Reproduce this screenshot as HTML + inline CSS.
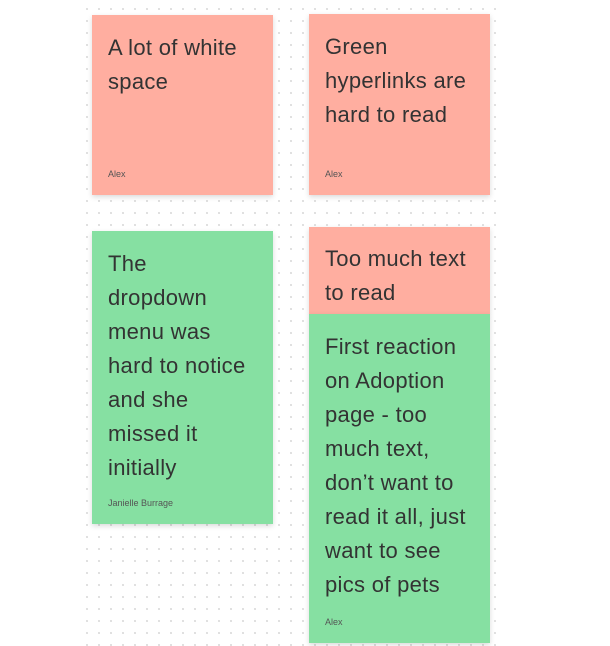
<!DOCTYPE html>
<html><head><style>
body{margin:0;width:610px;height:646px;background:#fff;position:relative;overflow:hidden;font-family:"Liberation Sans",sans-serif;}
.grid{position:absolute;left:80px;top:0;width:425px;height:646px;background-image:radial-gradient(circle,#d8d8d8 0.8px,transparent 1.1px);background-size:12px 12px;background-position:1px 3px;}
.c{position:absolute;box-sizing:border-box;padding:16px 10px 0 16px;color:#333;font-size:22px;line-height:34px;letter-spacing:0.3px;white-space:nowrap;box-shadow:0 2px 5px rgba(0,0,0,.15);}
.p{background:#ffaea0}.g{background:#86e0a2}
.a{position:absolute;left:16px;font-size:9px;line-height:10px;color:#555;letter-spacing:0;}
</style></head><body>
<div class="grid"></div>
<div class="c p" style="left:92px;top:15px;width:181px;height:180px">A lot of white<br>space<div class="a" style="top:154px">Alex</div></div>
<div class="c p" style="left:309px;top:14px;width:181px;height:181px">Green<br>hyperlinks are<br>hard to read<div class="a" style="top:155px">Alex</div></div>
<div class="c g" style="left:92px;top:231px;width:181px;height:293px">The<br>dropdown<br>menu was<br>hard to notice<br>and she<br>missed it<br>initially<div class="a" style="top:267px">Janielle Burrage</div></div>
<div class="c p" style="left:309px;top:227px;width:181px;height:87px;padding-top:15px">Too much text<br>to read</div>
<div class="c g" style="left:309px;top:314px;width:181px;height:329px">First reaction<br>on Adoption<br>page - too<br>much text,<br>don’t want to<br>read it all, just<br>want to see<br>pics of pets<div class="a" style="top:303px">Alex</div></div>
</body></html>
